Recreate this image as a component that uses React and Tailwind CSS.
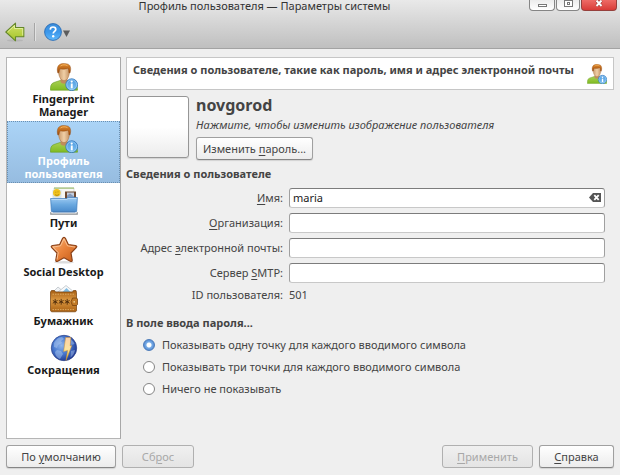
import React, { useState } from "react";

function UserIcon({ id, className }) {
  return (
    <svg viewBox="0 0 28 28" className={className} aria-hidden="true">
      <defs>
        <linearGradient id={`${id}-shirt`} x1="0" y1="0" x2="0" y2="1">
          <stop offset="0" stopColor="#a9cf52" />
          <stop offset="1" stopColor="#7fbb22" />
        </linearGradient>
        <linearGradient id={`${id}-hair`} x1="0" y1="0" x2="0" y2="1">
          <stop offset="0" stopColor="#e08a2e" />
          <stop offset="1" stopColor="#9c4a0c" />
        </linearGradient>
        <linearGradient id={`${id}-face`} x1="0" y1="0" x2="1" y2="0">
          <stop offset="0" stopColor="#c99a6c" />
          <stop offset="0.5" stopColor="#f0cfa6" />
          <stop offset="1" stopColor="#c39264" />
        </linearGradient>
        <linearGradient id={`${id}-badge`} x1="0" y1="0" x2="0" y2="1">
          <stop offset="0" stopColor="#4f9be0" />
          <stop offset="1" stopColor="#7cc0f2" />
        </linearGradient>
      </defs>
      <path d="M0.5 27.2C0.3 23 1 20.5 4 19.5L10 17.5h8l6 2c2.500 1 3.500 3.500 3.500 7.700z" fill={`url(#${id}-shirt)`} stroke="#679c20" strokeWidth="0.6" />
      <path d="M10.500 15h7v4c-1.500 2.200-5.500 2.200-7 0z" fill="#c08c5c" />
      <path d="M8.500 8c0-4 2-5.500 5.500-5.500S19.500 4 19.500 8c0 5-2 9.500-5.500 9.500S8.500 13 8.500 8z" fill={`url(#${id}-face)`} stroke="#a87446" strokeWidth="0.500" />
      <path d="M7.800 10C6.400 5 7.800 0.800 13 0.500c2-.3 3 .2 4.200.4 3.400.6 4.200 4.600 2.800 9.100l-1.200-.5c.2-2-.2-3.600-1-4.300-1.800 1-5.800 1.200-7.600.6-.8 1-1 2.400-1.200 3.800z" fill={`url(#${id}-hair)`} stroke="#8c430c" strokeWidth="0.400" />
      <path d="M10.500 3c2-1.500 5-1.500 7-.3" fill="none" stroke="#f3b561" strokeWidth="0.900" />
      <circle cx="21.700" cy="21.700" r="5.900" fill={`url(#${id}-badge)`} stroke="#2f74bb" strokeWidth="0.800" />
      <circle cx="21.700" cy="21.700" r="4.900" fill="none" stroke="#a6d4f6" strokeWidth="0.700" />
      <rect x="20.800" y="20.500" width="1.900" height="4.800" fill="#fff" />
      <circle cx="21.700" cy="18.600" r="1.100" fill="#fff" />
    </svg>
  );
}

function FolderIcon() {
  return (
    <svg viewBox="0 0 28 28" className="size-7" aria-hidden="true">
      <defs>
        <linearGradient id="folder" x1="0" y1="0" x2="0" y2="1">
          <stop offset="0" stopColor="#9fcbf2" />
          <stop offset="0.5" stopColor="#6ba9e0" />
          <stop offset="1" stopColor="#4b8ccd" />
        </linearGradient>
      </defs>
      <path d="M4 1h20v14H4z" fill="#f7f7f3" stroke="#b9c2b5" strokeWidth="0.500" />
      <path d="M4 0.500h20v1.200H4z" fill="#9fbf73" />
      <path d="M2.500 3h9v9h-9z" fill="#d9e4ea" />
      <circle cx="6.800" cy="5.800" r="3.800" fill="#f1c21c" />
      <path d="M5 7.500c1 1.200 3 1.200 4-.2M5.800 4.800v.8M8 4.500v.8" stroke="#98720e" strokeWidth="0.700" fill="none" />
      <path d="M15 4.500h11V13H15z" fill="#6f4a31" />
      <path d="M17 5.500h7V13h-7z" fill="#c4cfe0" />
      <path d="M17 8.500l3-2 4 3V13h-7z" fill="#8498b8" />
      <path d="M0.600 11.500h15.900l1.500-1h9.400l-.8 14H1.400z" fill="url(#folder)" stroke="#3b7abb" strokeWidth="0.700" />
      <path d="M1.400 12.400h15.400l1.400-1h8.300" stroke="#d3e9fb" strokeWidth="0.700" fill="none" />
      <path d="M2.500 25h23" stroke="#356fae" strokeWidth="1" />
      <path d="M0.800 25.500v1.700h26.400v-1.700" fill="none" stroke="#8b8f94" strokeWidth="1.200" strokeLinecap="round" />
    </svg>
  );
}

function StarIcon() {
  return (
    <svg viewBox="0 0 28 28" className="size-7" aria-hidden="true">
      <defs>
        <linearGradient id="star" x1="0" y1="0" x2="1" y2="1">
          <stop offset="0" stopColor="#f9b67c" />
          <stop offset="0.5" stopColor="#e9823a" />
          <stop offset="1" stopColor="#c35a17" />
        </linearGradient>
      </defs>
      <ellipse cx="14" cy="26.300" rx="10" ry="1.200" fill="#ddd" />
      <path d="M14 1.300Q15 1.300 15.500 2.600L18.300 8.600 25.400 9.500Q27.800 10 26 11.900L21 17 22.200 24Q22.300 26.200 20.300 25.200L14 21.800 7.700 25.200Q5.700 26.200 5.800 24L7 17 2 11.900Q0.200 10 2.600 9.500L9.700 8.600 12.500 2.600Q13 1.300 14 1.300z" fill="url(#star)" stroke="#8a421a" strokeWidth="1.200" strokeLinejoin="round" />
      <path d="M7 23.500L8.200 16.600 3 11.100 10.500 9.800 14 2.800 17.500 9.800 25 11.100" fill="none" stroke="#fbcda4" strokeWidth="0.800" />
    </svg>
  );
}

function WalletIcon() {
  const stars = [5.2, 11.2, 17.2];
  return (
    <svg viewBox="0 0 28 28" className="size-7" aria-hidden="true">
      <defs>
        <linearGradient id="wallet" x1="0" y1="0" x2="0" y2="1">
          <stop offset="0" stopColor="#a45c12" />
          <stop offset="0.450" stopColor="#dd9a42" />
          <stop offset="1" stopColor="#a96012" />
        </linearGradient>
      </defs>
      <path d="M3 7L8 2l6 5z" fill="#eef1f4" stroke="#a9b0b7" strokeWidth="0.600" />
      <path d="M8 7l8-6.500L24 7z" fill="#f7f9fa" stroke="#a9b0b7" strokeWidth="0.600" />
      <path d="M12.500 7l4-4 4 4z" fill="#7fbbe2" />
      <path d="M1.500 5.500h3l1 1.500h17l1-1.500H26l.5 2v18.300l-1 1h-24l-1-1V7z" fill="url(#wallet)" stroke="#76400a" strokeWidth="0.700" />
      <path d="M2.500 9.200h22.300M2.500 24.600h22.300" stroke="#eec37e" strokeWidth="0.700" strokeDasharray="1.500 1" />
      <path d="M22.500 13h4l1 1v5.500l-1 1h-4l-1.500-3.700z" fill="#c17a26" stroke="#6b390a" strokeWidth="0.700" />
      <circle cx="24.200" cy="16.800" r="0.900" fill="#f0cf90" />
      {stars.map((x) => (
        <path key={x} d={`M${x} 13.900v5.800M${x - 2.4} 15.400l4.800 2.800M${x + 2.4} 15.400l-4.800 2.800`} stroke="#4a2809" strokeWidth="0.900" />
      ))}
    </svg>
  );
}

function GlobeIcon() {
  return (
    <svg viewBox="0 0 28 28" className="size-7" aria-hidden="true">
      <defs>
        <radialGradient id="globe" cx="0.400" cy="0.400" r="0.650">
          <stop offset="0" stopColor="#8fb4ea" />
          <stop offset="0.500" stopColor="#4a7bd0" />
          <stop offset="1" stopColor="#1c3590" />
        </radialGradient>
        <linearGradient id="bolt" x1="0" y1="0" x2="0" y2="1">
          <stop offset="0" stopColor="#fbd0a6" />
          <stop offset="0.5" stopColor="#fbe3a0" />
          <stop offset="1" stopColor="#f4c010" />
        </linearGradient>
      </defs>
      <circle cx="14" cy="14" r="12.700" fill="url(#globe)" stroke="#2a3f86" strokeWidth="0.700" />
      <path d="M4 9c2-4 5-6 8-6l2 2-3 2 1 2-4 2-1 3-3-1zM7 16l4 1 2 3-3 5c-3-1-5-4-5-7zM20 5c2 1 4 3 4.500 5l-3 1zM21 17l4-1c-.5 3-2 6-4.500 7.500z" fill="#b6cef2" opacity="0.450" />
      <path d="M15.600 3.500h5.200l-.6 8.500 1.600-.4L16 26.500l1.600-10-4 1z" fill="url(#bolt)" stroke="#cf9030" strokeWidth="0.500" strokeLinejoin="round" />
    </svg>
  );
}

function BackIcon() {
  return (
    <svg viewBox="0 0 20 20" className="size-5" aria-hidden="true">
      <defs>
        <linearGradient id="back" x1="0" y1="0" x2="0" y2="1">
          <stop offset="0" stopColor="#d3e36b" />
          <stop offset="1" stopColor="#a3c327" />
        </linearGradient>
      </defs>
      <ellipse cx="10" cy="18.500" rx="8" ry="1" fill="#aaa" opacity="0.600" />
      <path d="M0.800 10L10.500 1.200v4.300h8.300v9.200h-8.300v4.100z" fill="url(#back)" stroke="#64872a" strokeWidth="1.100" strokeLinejoin="round" />
      <path d="M2.500 10l7-6.500v3h8.200v7" fill="none" stroke="#e9f2a8" strokeWidth="0.800" />
    </svg>
  );
}

function HelpIcon() {
  return (
    <svg viewBox="0 0 18 18" className="size-[18px]" aria-hidden="true">
      <defs>
        <linearGradient id="help" x1="0" y1="0" x2="0" y2="1">
          <stop offset="0" stopColor="#3d8fdc" />
          <stop offset="0.5" stopColor="#3c97ea" />
          <stop offset="1" stopColor="#5fb8fb" />
        </linearGradient>
      </defs>
      <circle cx="9" cy="9" r="8.400" fill="url(#help)" stroke="#2a6cb4" strokeWidth="0.900" />
      <path d="M6.200 6.600C6.300 4.700 7.400 4 9 4c1.700 0 2.800.9 2.800 2.400 0 2-2.600 2-2.600 4.200" fill="none" stroke="#fff" strokeWidth="1.700" />
      <circle cx="9.200" cy="13.200" r="1.200" fill="#fff" />
    </svg>
  );
}

const modules = [
  { name: "Fingerprint Manager", icon: <UserIcon id="fingerprint" className="size-7" /> },
  { name: "Профиль пользователя", icon: <UserIcon id="profile" className="size-7" /> },
  { name: "Пути", icon: <FolderIcon /> },
  { name: "Social Desktop", icon: <StarIcon /> },
  { name: "Бумажник", icon: <WalletIcon /> },
  { name: "Сокращения", icon: <GlobeIcon /> },
];

const fields = [
  { id: "name", before: "", key: "И", after: "мя:", value: "maria" },
  { id: "organization", before: "", key: "О", after: "рганизация:", value: "" },
  { id: "email", before: "Адрес ", key: "э", after: "лектронной почты:", value: "" },
  { id: "smtp", before: "Сервер ", key: "S", after: "MTP:", value: "" },
];

const echoModes = [
  "Показывать одну точку для каждого вводимого символа",
  "Показывать три точки для каждого вводимого символа",
  "Ничего не показывать",
];

function Mnemonic({ before, letter, after }) {
  return (
    <span>
      {before}
      <span className="underline underline-offset-2">{letter}</span>
      {after}
    </span>
  );
}

function Button({ before = "", letter, after, disabled = false, className = "" }) {
  return (
    <button
      type="button"
      disabled={disabled}
      className={`flex h-[23px] items-center justify-center rounded-[3px] border border-[#a0a0a0] border-b-[#858585] bg-linear-to-b from-white to-[#ececec] pb-px text-[#444] shadow-[0_1px_1px_#d2d2d2] disabled:border-[#b0b0b0] disabled:from-[#f0f0f0] disabled:to-[#e4e4e4] disabled:text-[#a8a8a8] disabled:shadow-none ${className}`}
    >
      <Mnemonic before={before} letter={letter} after={after} />
    </button>
  );
}

function TitleBar() {
  const base = "flex h-[11px] justify-center rounded-b-[4px] border border-t-0";
  return (
    <div className="flex h-[11px] items-start">
      <h1 className="flex-1 text-center leading-[11px] text-[#333]">
        Профиль пользователя — Параметры системы
      </h1>
      <div className="flex gap-px pr-[3px]">
        <button type="button" aria-label="Свернуть" className={`${base} w-[26px] items-center border-[#858585] bg-linear-to-b from-[#ececec] to-white`}>
          <span className="h-[3px] w-[9px] border border-[#777] bg-white" />
        </button>
        <button type="button" aria-label="Развернуть" className={`${base} w-6 items-start border-[#858585] bg-linear-to-b from-[#ececec] to-white`}>
          <span className="flex h-[7px] w-[9px] items-center justify-center border border-[#777] bg-white">
            <span className="size-[3px] border border-[#777]" />
          </span>
        </button>
        <button type="button" aria-label="Закрыть" className={`${base} w-9 items-start border-[#96403c] bg-linear-to-b from-[#ee6b66] to-[#d83a37]`}>
          <svg viewBox="0 0 8 7" className="h-[7px] w-2" aria-hidden="true">
            <path d="M1.500 0.500l5 5.500M6.500 0.500l-5 5.500" stroke="#8b2b28" strokeWidth="3" />
            <path d="M1.500 0.500l5 5.500M6.500 0.500l-5 5.500" stroke="#fff" strokeWidth="2" />
          </svg>
        </button>
      </div>
    </div>
  );
}

export default function App() {
  const [selected, setSelected] = useState(1);
  const [echo, setEcho] = useState(0);
  const [values, setValues] = useState(fields.map((f) => f.value));
  const setValue = (i, v) => setValues(values.map((old, n) => (n === i ? v : old)));

  return (
    <div className="flex min-h-screen flex-col bg-[#efefef] font-['Noto_Sans',sans-serif] text-[11px] leading-[13px] text-[#444]">
      <header className="border-b border-[#a3a3a3] bg-linear-to-b from-[#e9e9e9] to-[#bfbfbf]">
        <TitleBar />
        <div className="flex h-[37px] items-center pl-[5px] pt-1">
          <button type="button" aria-label="Назад">
            <BackIcon />
          </button>
          <span className="mx-[9px] h-[18px] w-px bg-[#a5a5a5] shadow-[1px_0_0_#e2e2e2]" />
          <button type="button" aria-label="Справка" className="flex items-center gap-px">
            <HelpIcon />
            <svg viewBox="0 0 7 7" className="mt-1 size-[7px]" aria-hidden="true">
              <path d="M0 0.500h7L3.500 7z" fill="#5c5c5c" />
            </svg>
          </button>
        </div>
      </header>

      <div className="flex flex-1 gap-[5px] px-1.5 pt-2">
        <nav className="w-[115px] shrink-0 border border-[#b5b5b5] border-r-[#a8a8a8] bg-white pt-px">
          {modules.map((m, i) => (
            <button
              key={m.name}
              type="button"
              onClick={() => setSelected(i)}
              className={
                i === selected
                  ? "flex w-full flex-col items-center gap-px bg-linear-to-b from-[#abd4f7] to-[#96bce0] px-2 pb-[3px] pt-1 font-bold text-white outline-1 -outline-offset-1 outline-dotted outline-[#6b8fb0]"
                  : "flex w-full flex-col items-center gap-px px-2 pb-[3px] pt-1 font-bold text-[#1a1a1a]"
              }
            >
              {m.icon}
              <span>{m.name}</span>
            </button>
          ))}
        </nav>

        <main className="min-w-0 flex-1 pb-9">
          <div className="flex h-[33px] items-center justify-between border border-[#c6c6c6] bg-white px-1.5">
            <h2 className="pb-2 font-bold">Сведения о пользователе, такие как пароль, имя и адрес электронной почты</h2>
            <UserIcon id="header" className="size-5" />
          </div>

          <div className="flex items-start gap-[7px] pl-px pt-1.5">
            <button type="button" aria-label="Изображение пользователя" className="size-[62px] rounded-[3px] border border-[#969696] bg-linear-to-b from-white from-50% to-[#ececec] shadow-[0_1px_1px_#d2d2d2]" />
            <div className="flex flex-col items-start">
              <h3 className="text-[16px] font-bold leading-[18px]">novgorod</h3>
              <p className="pb-[6px] pt-1 italic">Нажмите, чтобы изменить изображение пользователя</p>
              <Button before="Изменить " letter="п" after="ароль..." className="w-[117px]" />
            </div>
          </div>

          <h3 className="pt-[7px] font-bold">Сведения о пользователе</h3>
          <div className="grid grid-cols-[157px_1fr] gap-x-1.5 gap-y-[5px] pr-[9px] pt-2">
            {fields.map((f, i) => (
              <React.Fragment key={f.id}>
                <label htmlFor={f.id} className="self-center pb-0.5 text-right">
                  <Mnemonic before={f.before} letter={f.key} after={f.after} />
                </label>
                <div className="flex h-5 items-center rounded-[3px] border border-[#a0a0a0] border-b-[#c8c8c8] border-t-[#7c7c7c] bg-white pb-0.5 pr-[3px]">
                  <input
                    id={f.id}
                    type="text"
                    value={values[i]}
                    onChange={(e) => setValue(i, e.target.value)}
                    className="min-w-0 flex-1 bg-transparent px-[3px] text-[#1a1a1a] outline-none"
                  />
                  {values[i] && (
                    <button type="button" aria-label="Очистить" onClick={() => setValue(i, "")}>
                      <svg viewBox="0 0 12 9" className="h-[9px] w-3" aria-hidden="true">
                        <path d="M0 4.500L4 0h8v9H4z" fill="#555" />
                        <path d="M5.300 2.200l4.400 4.600M9.700 2.200L5.300 6.800" stroke="#fff" strokeWidth="1.800" />
                      </svg>
                    </button>
                  )}
                </div>
              </React.Fragment>
            ))}
            <span className="text-right">ID пользователя:</span>
            <output>501</output>
          </div>

          <fieldset className="pt-[15px]">
            <legend className="float-left w-full font-bold">В поле ввода пароля...</legend>
            <div className="clear-both flex flex-col items-start gap-[9px] pl-[17px] pt-[9px]">
              {echoModes.map((mode, i) => (
                <label key={mode} className="flex items-center gap-[7px]">
                  <input
                    type="radio"
                    name="echo"
                    checked={echo === i}
                    onChange={() => setEcho(i)}
                    className="size-3 appearance-none rounded-full border border-[#858585] bg-white checked:border-[#4a7ab8] checked:bg-[radial-gradient(circle,#fff_0_2px,#78ade6_3px,#5a8fd6_5px)]"
                  />
                  {mode}
                </label>
              ))}
            </div>
          </fieldset>
        </main>
      </div>

      <footer className="flex gap-1.5 px-1.5 pb-[7px] pt-1.5">
        <Button before="По " letter="у" after="молчанию" className="w-[110px]" />
        <Button before="Сб" letter="р" after="ос" disabled className="w-[72px]" />
        <span className="flex-1" />
        <Button letter="П" after="рименить" disabled className="w-[91px]" />
        <Button letter="С" after="правка" className="w-[75px]" />
      </footer>
    </div>
  );
}
